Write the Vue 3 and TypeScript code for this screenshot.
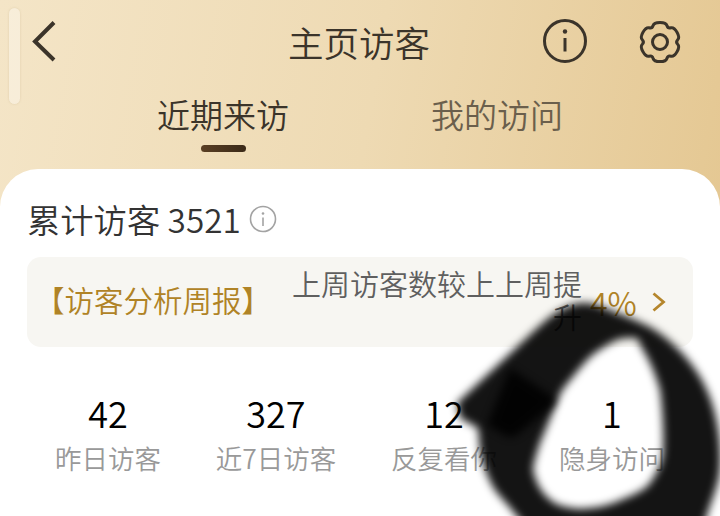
<script setup lang="ts">
const stats = [
  { value: '42', label: '昨日访客' },
  { value: '327', label: '近7日访客' },
  { value: '12', label: '反复看你' },
  { value: '1', label: '隐身访问' },
]

function gear(cx: number, cy: number): string {
  const pts: [number, number][] = []
  for (let k = 0; k < 6; k++) {
    const a = -90 + k * 60
    for (const [d, r] of [[-17, 20.5], [17, 20.5], [30, 15.5]] as [number, number][]) {
      const t = ((a + d) * Math.PI) / 180
      pts.push([cx + r * Math.cos(t), cy + r * Math.sin(t)])
    }
  }
  const mid = (p: [number, number], q: [number, number]) => [(p[0] + q[0]) / 2, (p[1] + q[1]) / 2]
  const start = mid(pts[pts.length - 1], pts[0])
  let d = `M${start[0].toFixed(1)} ${start[1].toFixed(1)}`
  pts.forEach((p, i) => {
    const m = mid(p, pts[(i + 1) % pts.length])
    d += `Q${p[0].toFixed(1)} ${p[1].toFixed(1)} ${m[0].toFixed(1)} ${m[1].toFixed(1)}`
  })
  return d + 'Z'
}
const gearPath = gear(24, 24)
</script>

<template>
  <div class="page">
    <div class="scroll-thumb"></div>
    <header class="header">
      <div class="side">
        <svg class="back" width="30" height="46" viewBox="0 0 30 46" fill="none">
          <path d="M26 3.5 L7 22.5 L26 41" stroke="#3b342a" stroke-width="4" />
        </svg>
      </div>
      <h1 class="title">主页访客</h1>
      <div class="side actions">
        <svg width="46" height="46" viewBox="0 0 46 46" fill="none">
          <circle cx="22" cy="22" r="20.5" stroke="#3b342a" stroke-width="3" />
          <circle cx="22" cy="12.5" r="2.2" fill="#3b342a" />
          <path d="M22 19V32.5" stroke="#3b342a" stroke-width="3" />
        </svg>
        <svg width="48" height="48" viewBox="0 0 48 48" fill="none">
          <path :d="gearPath" stroke="#3b342a" stroke-width="3" stroke-linejoin="round" />
          <circle cx="24" cy="24" r="7.5" stroke="#3b342a" stroke-width="3" />
        </svg>
      </div>
    </header>

    <nav class="tabs">
      <div class="tab active">近期来访<span class="underline"></span></div>
      <div class="tab">我的访问</div>
    </nav>

    <main class="card">
      <div class="total">
        <span>累计访客 3521</span>
        <svg width="28" height="28" viewBox="0 0 28 28" fill="none">
          <circle cx="14" cy="14" r="12.5" stroke="#a3a3a3" stroke-width="1.6" />
          <circle cx="14" cy="8.5" r="1.3" fill="#a3a3a3" />
          <path d="M14 12.5V21" stroke="#a3a3a3" stroke-width="1.6" />
        </svg>
      </div>

      <section class="report">
        <span class="report-tag">【访客分析周报】</span>
        <span class="report-text">上周访客数较上上周提升</span>
        <span class="report-pct">4%</span>
        <svg class="report-arrow" width="16" height="22" viewBox="0 0 16 22" fill="none">
          <path d="M2.5 2.5 L12.5 11 L2.5 19.5" stroke="#b5862c" stroke-width="2.8" />
        </svg>
      </section>

      <section class="stats">
        <div v-for="s in stats" :key="s.label" class="stat">
          <div class="stat-value">{{ s.value }}</div>
          <div class="stat-label">{{ s.label }}</div>
        </div>
      </section>
    </main>

    <svg class="scribble" width="720" height="516" viewBox="0 0 720 516">
      <path class="ink" fill-rule="evenodd" fill="#000" fill-opacity="0.92"
        d="M457 403 L517 347 C530 335 540 325 550 317 C565 306 575 303 583 303 C595 303 605 308 617 313 C630 318 640 322 650 327 C680 345 705 375 714 410 C722 440 722 470 717 485 C713 500 708 508 703 530 L527 530 C510 505 500 498 493 487 C485 472 482 460 480 450 L478 428 L460 418 Z
           M637 338 C628 338 622 338 617 340 C608 344 598 350 590 357 C580 367 572 378 563 389 C558 397 550 420 540 443 C536 455 534 462 533 470 C536 482 540 490 547 497 C553 503 560 506 567 507 C575 509 582 509 590 508 C602 507 612 504 623 499 C635 494 645 490 650 483 C658 472 663 460 663 450 C664 430 662 405 660 390 C655 372 648 358 643 350 Z" />
      <path class="ink-soft" fill="#000"
        d="M510 368 L553 397 C556 399 556 402 553 405 L518 434 C514 437 510 438 506 436 L487 425 Z" />
    </svg>
  </div>
</template>

<style>
html, body { margin: 0; background: #fff; }
</style>

<style scoped>
.page {
  position: relative;
  width: 720px;
  height: 516px;
  overflow: hidden;
  display: flex;
  flex-direction: column;
  background: linear-gradient(100deg, #f4e5c7 0%, #eedab3 48%, #e3c58e 100%);
  font-family: "Noto Sans CJK SC", "Noto Sans", sans-serif;
  font-weight: 350;
}
.scroll-thumb {
  position: absolute;
  left: 9px;
  top: 8px;
  width: 11px;
  height: 96px;
  border-radius: 6px;
  background: rgba(250, 244, 230, 0.6);
  box-shadow: 0 0 2px rgba(200, 180, 140, 0.5);
}
.header {
  display: grid;
  grid-template-columns: 1fr auto 1fr;
  align-items: center;
  height: 48px;
  margin-top: 18px;
  padding: 0 36px 0 28px;
}
.side { display: flex; align-items: center; }
.actions { justify-content: flex-end; gap: 47px; }
.back { display: block; }
.title {
  margin: 0 0 0 6px;
  font-size: 35.5px;
  font-weight: 350;
  line-height: 48px;
  color: #3b342a;
}
.tabs {
  display: flex;
  margin-top: 24px;
  padding-left: 157px;
  gap: 142px;
  height: 79px;
}
.tab {
  position: relative;
  font-size: 33px;
  line-height: 48px;
  color: #6b5f4c;
}
.tab.active { color: #3b342a; }
.underline {
  position: absolute;
  left: 44px;
  top: 55px;
  width: 45px;
  height: 7px;
  border-radius: 4px;
  background: linear-gradient(90deg, #5a3f24, #3b2a18);
}
.card {
  flex: 1;
  background: #fff;
  border-radius: 38px 38px 0 0;
  padding: 27px 27px 0;
  min-height: 0;
}
.total {
  display: flex;
  align-items: center;
  gap: 8px;
  height: 46px;
  font-size: 33.3px;
  line-height: 46px;
  color: #333;
}
.report {
  position: relative;
  display: flex;
  align-items: center;
  margin-top: 15px;
  height: 90px;
  border-radius: 14px;
  background: #f7f6f2;
  padding-left: 8px;
  box-sizing: border-box;
}
.report-tag {
  width: 257px;
  flex: none;
  margin-top: -6px;
  font-size: 29.5px;
  line-height: 40px;
  color: #b08326;
  white-space: nowrap;
}
.report-text {
  flex: none;
  width: 290px;
  margin-top: -5px;
  font-size: 29px;
  line-height: 33px;
  text-align: right;
  color: #5f5f5f;
}
.report-pct {
  margin-left: 8px;
  font-size: 32px;
  line-height: 40px;
  color: #b08326;
}
.report-arrow { margin-left: 14px; }
.stats {
  display: grid;
  grid-template-columns: repeat(4, 168px);
  margin: 41px 0 0 -3px;
}
.stat { text-align: center; white-space: nowrap; }
.stat-value {
  font-size: 36px;
  line-height: 48px;
  color: #000;
}
.stat-label {
  margin-top: 2px;
  font-size: 26.5px;
  line-height: 40px;
  color: #999;
}
.scribble {
  position: absolute;
  left: 0;
  top: 0;
  pointer-events: none;
}
.ink { filter: blur(4.5px); }
.ink-soft { filter: blur(4px); opacity: 0.85; }
</style>
